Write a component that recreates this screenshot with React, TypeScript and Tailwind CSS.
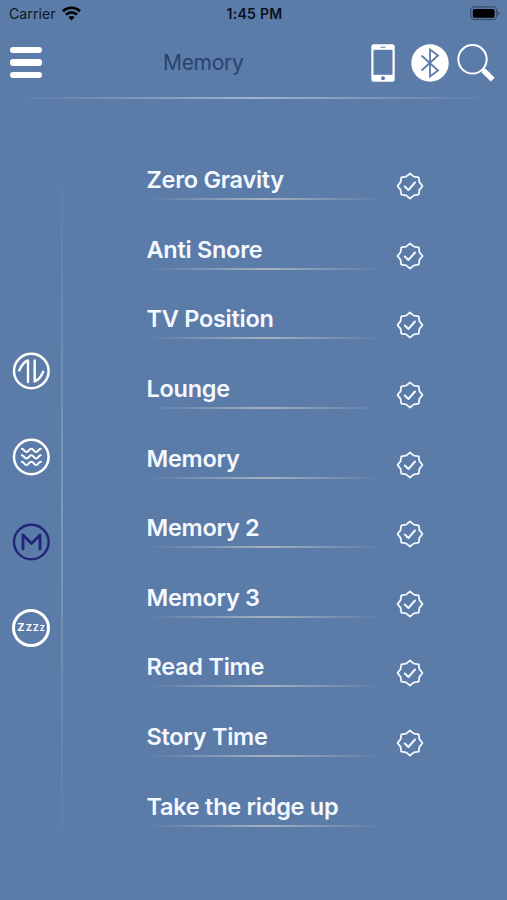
import React from 'react'

const presets = [
  'Zero Gravity',
  'Anti Snore',
  'TV Position',
  'Lounge',
  'Memory',
  'Memory 2',
  'Memory 3',
  'Read Time',
  'Story Time',
  'Take the ridge up',
]

const StatusBar = () => (
  <div className="grid grid-cols-3 items-center h-[27px] pl-[9px] pr-[7px] text-[14px] text-[#101722]">
    <div className="flex items-center gap-[6px]">
      <span className="tracking-[0.1px]">Carrier</span>
      <svg className="-mt-px" width="19" height="15" viewBox="0 0 19 15" fill="none" stroke="#000" strokeWidth="2.6">
        <path d="M1 5.2a12.3 12.3 0 0 1 17 0" />
        <path d="M4 8.6a7.8 7.8 0 0 1 11 0" />
        <path d="M9.5 14.4L6.4 11.2a4.4 4.4 0 0 1 6.2 0z" fill="#000" stroke="none" />
      </svg>
    </div>
    <span className="text-center font-semibold text-[14px] tracking-[0.3px] text-[#0b111b]">1:45 PM</span>
    <svg className="justify-self-end -mt-px" width="31" height="15" viewBox="0 0 31 15">
      <rect x="1.7" y="0.9" width="26" height="12.6" rx="4" fill="none" stroke="#3a5070" strokeWidth="1.3" />
      <rect x="3.8" y="2.9" width="21.8" height="8.8" rx="1.8" fill="#000" />
      <path d="M28.8 4.9c2.2.8 2.2 3.8 0 4.6z" fill="#3a5070" />
    </svg>
  </div>
)

const Header = () => (
  <div className="flex items-center h-[70px] pt-px pl-[10px] pr-3">
    <div className="flex flex-col gap-[6px] w-8">
      <span className="h-[6.5px] rounded-[3px] bg-white" />
      <span className="h-[6.5px] rounded-[3px] bg-white" />
      <span className="h-[6.5px] rounded-[3px] bg-white" />
    </div>
    <h1 className="ml-[121px] flex-1 text-[21px] leading-7 tracking-[-0.3px] text-[#27436f]">Memory</h1>
    <div className="flex items-center">
      <svg width="24" height="38" viewBox="0 0 24 38">
        <rect x="0.3" y="0.3" width="23.4" height="37.4" rx="2.5" fill="#fff" />
        <rect x="2.5" y="5.8" width="19" height="25" fill="#5b7ba9" />
        <path d="M9.5 3.2h5" stroke="#5b7ba9" />
        <circle cx="12" cy="34.2" r="2" fill="#5b7ba9" />
      </svg>
      <svg className="ml-4" width="38" height="38" viewBox="0 0 38 38">
        <circle cx="19" cy="19" r="18.7" fill="#fff" />
        <path d="M10.5 11.5L27 26.5L19 32.5V5.5L27 11.5L10.5 26.5" fill="none" stroke="#5b7ba9" strokeWidth="1.8" />
      </svg>
      <svg className="ml-2" width="38" height="38" viewBox="0 0 38 38" fill="none" stroke="#fff">
        <circle cx="15.5" cy="15.3" r="14.2" strokeWidth="2" />
        <path d="M25 25l3 3" strokeWidth="3.5" />
        <path d="M26.5 26.5l9.2 9.2" strokeWidth="5.4" />
      </svg>
    </div>
  </div>
)

const SideNav = () => (
  <div className="flex flex-col gap-[47.6px] w-[61px] pl-3 pt-[253px]">
    <svg width="38" height="38" viewBox="0 0 38 38" fill="none" stroke="#fff" strokeLinecap="round" strokeLinejoin="round">
      <circle cx="19.3" cy="19" r="17.3" strokeWidth="2.5" />
      <path d="M16 30V8.5C13 9 9.5 13.5 7.2 18.5" strokeWidth="2.4" />
      <path d="M22.7 8.5v21C26.5 28 29.5 24 31.2 19.8" strokeWidth="2.4" />
    </svg>
    <svg width="38" height="38" viewBox="0 0 38 38" fill="none" stroke="#fff" strokeLinecap="round" strokeLinejoin="round">
      <circle cx="19.3" cy="19" r="17.3" strokeWidth="2.5" />
      <path d="M9.8 10.7C12 10.7 12.3 14 14.5 14S17 10.7 19.300 10.7S21.900 14 24.100 14S26.600 10.7 28.800 10.7" strokeWidth="2" />
      <path d="M9.8 17.2C12 17.2 12.3 20.5 14.5 20.5S17 17.2 19.300 17.2S21.900 20.5 24.100 20.5S26.600 17.2 28.800 17.2" strokeWidth="2" />
      <path d="M9.8 23.7C12 23.7 12.3 27 14.5 27S17 23.7 19.300 23.7S21.900 27 24.100 27S26.600 23.7 28.800 23.7" strokeWidth="2" />
    </svg>
    <svg width="38" height="38" viewBox="0 0 38 38" fill="none" stroke="#20247a" strokeLinejoin="round" strokeLinecap="round">
      <circle cx="19.3" cy="19" r="17.3" strokeWidth="2.4" />
      <path d="M11 26V12L19.5 20.5L28 12V26" strokeWidth="2.8" />
    </svg>
    <div className="flex items-baseline justify-center gap-px w-[38px] h-[38px] pt-[10.5px] rounded-full border-[3px] border-white font-bold text-white leading-none">
      <span className="text-[11px]">Z</span>
      <span className="text-[9.5px]">Z</span>
      <span className="text-[8.5px]">Z</span>
      <span className="text-[7.5px]">Z</span>
    </div>
  </div>
)

const CheckSeal = () => (
  <svg className="mt-2" width="28" height="28" viewBox="0 0 28 28" fill="none" stroke="#f4f8ff" strokeLinejoin="round" strokeLinecap="round">
    <path
      d="M14 1.5L17.9 4.6L22.7 5.3L23.4 10.1L26.5 14L23.4 17.9L22.7 22.7L17.9 23.4L14 26.5L10.1 23.4L5.3 22.7L4.6 17.9L1.5 14L4.6 10.1L5.3 5.3L10.1 4.6Z"
      strokeWidth="1.8"
    />
    <path d="M8.8 14.5L12.4 18L19 10.5" strokeWidth="2" />
  </svg>
)

const Page = () => {
  return (
    <div className="w-full h-[900px] overflow-hidden bg-[#5b7ba9] font-['Inter','Liberation_Sans',sans-serif]">
      <StatusBar />
      <Header />
      <div className="h-[2px] mx-3 bg-linear-to-r from-transparent via-[#9db4d2] to-transparent" />

      <div className="flex h-[801px]">
        <SideNav />
        <div className="w-[2px] mt-[50px] h-[720px] bg-linear-to-b from-transparent via-[#7b9bbb] to-transparent" />

        {/* Preset positions */}
        <div className="ml-[83.5px] pt-[65px]">
          {presets.map((name, i) => (
            <div key={name} className="flex h-[69.65px]">
              <div className="w-[249.5px]">
                <div className="h-[34px] leading-8 text-[23.5px] tracking-[-0.27px] font-semibold text-[#f4f8ff] whitespace-nowrap">{name}</div>
                <div className="h-[2px] w-[236px] bg-linear-to-r from-transparent via-[#a4b1c1] to-transparent" />
              </div>
              {i < presets.length - 1 && <CheckSeal />}
            </div>
          ))}
        </div>
      </div>
    </div>
  )
}

export default Page
